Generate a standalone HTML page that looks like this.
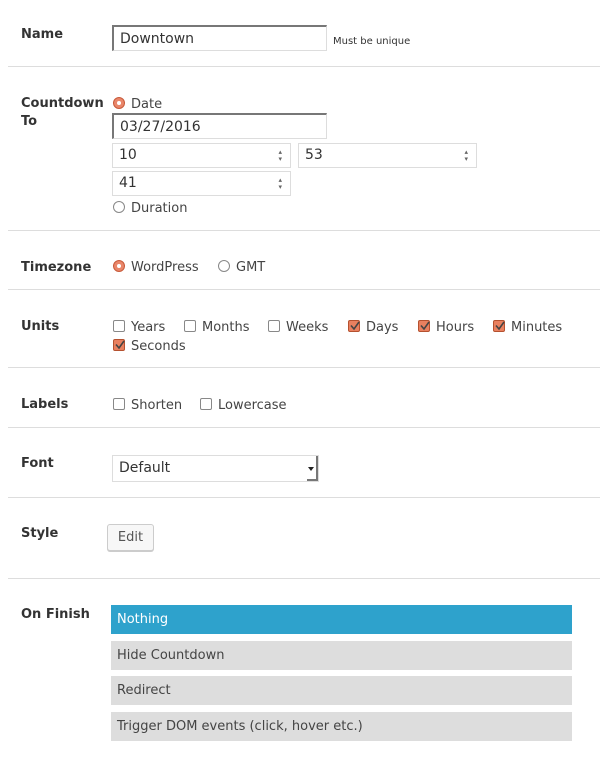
<!DOCTYPE html>
<html><head><meta charset="utf-8"><style>
*{margin:0;padding:0;box-sizing:border-box}
body{width:600px;height:757px;background:#fff;position:relative;font-family:"DejaVu Sans","Liberation Sans",sans-serif;font-size:13px;color:#444;overflow:hidden}
.a{position:absolute;white-space:nowrap;line-height:16px;margin-top:2px}
.l{font-weight:bold;color:#333;font-size:13px}
.hr{position:absolute;left:8px;right:0;height:1px;background:#ddd}
.in{position:absolute;border:1px solid #ddd;background:#fff;font-size:14px;color:#333;padding-left:6px;line-height:24px}
.in.d{border-top:2px solid #777;border-left:2px solid #777;box-shadow:none}
.sp{position:absolute;right:8px;top:5px;font-size:7px;line-height:7px;color:#666;text-align:center}
.r{position:absolute;width:12px;height:12px;border:1px solid #888;border-radius:50%;background:#fff}
.r.on{border-color:#c85a3a;background:#e9866a}
.r.on::after{content:"";position:absolute;left:3px;top:3px;width:4px;height:4px;border-radius:50%;background:#fff}
.c{position:absolute;width:12px;height:12px;border:1px solid #888;border-radius:2px;background:#fff}
.c.on{border-color:#b5512f;background:#e9805f}
.c.on svg{position:absolute;left:1px;top:0}
.opt{position:absolute;left:111px;width:461px;height:29px;background:#ddd;color:#444;padding-left:6px;line-height:30px}
</style></head><body>
<div class="a l" style="left:21px;top:25px">Name</div>
<div class="in d" style="left:112px;top:25px;width:215px;height:26px;line-height:24px">Downtown</div>
<div class="a" style="left:333px;top:32px;font-size:10px;color:#333">Must be unique</div>
<div class="hr" style="top:66px"></div>

<div class="a l" style="left:21px;top:94px">Countdown</div>
<div class="a l" style="left:21px;top:112px">To</div>
<div class="r on" style="left:113px;top:97px"></div><div class="a" style="left:131px;top:95px">Date</div>
<div class="in d" style="left:112px;top:113px;width:215px;height:26px">03/27/2016</div>
<div class="in" style="left:112px;top:143px;width:179px;height:25px;line-height:23px">10<div class="sp">▴<br>▾</div></div>
<div class="in" style="left:298px;top:143px;width:179px;height:25px;line-height:23px">53<div class="sp">▴<br>▾</div></div>
<div class="in" style="left:112px;top:171px;width:179px;height:25px;line-height:23px">41<div class="sp">▴<br>▾</div></div>
<div class="r" style="left:113px;top:201px"></div><div class="a" style="left:131px;top:199px">Duration</div>
<div class="hr" style="top:230px"></div>

<div class="a l" style="left:21px;top:258px">Timezone</div>
<div class="r on" style="left:113px;top:260px"></div><div class="a" style="left:131px;top:258px">WordPress</div>
<div class="r" style="left:218px;top:260px"></div><div class="a" style="left:236px;top:258px">GMT</div>
<div class="hr" style="top:289px"></div>

<div class="a l" style="left:21px;top:317px">Units</div>
<div class="c" style="left:113px;top:320px"></div><div class="a" style="left:131px;top:318px">Years</div>
<div class="c" style="left:184px;top:320px"></div><div class="a" style="left:202px;top:318px">Months</div>
<div class="c" style="left:268px;top:320px"></div><div class="a" style="left:286px;top:318px">Weeks</div>
<div class="c on" style="left:348px;top:320px"><svg width="10" height="10"><path d="M1 4.5L4 8L9 1" stroke="#444" stroke-width="1.6" fill="none"/></svg></div><div class="a" style="left:366px;top:318px">Days</div>
<div class="c on" style="left:418px;top:320px"><svg width="10" height="10"><path d="M1 4.5L4 8L9 1" stroke="#444" stroke-width="1.6" fill="none"/></svg></div><div class="a" style="left:436px;top:318px">Hours</div>
<div class="c on" style="left:493px;top:320px"><svg width="10" height="10"><path d="M1 4.5L4 8L9 1" stroke="#444" stroke-width="1.6" fill="none"/></svg></div><div class="a" style="left:511px;top:318px">Minutes</div>
<div class="c on" style="left:113px;top:339px"><svg width="10" height="10"><path d="M1 4.5L4 8L9 1" stroke="#444" stroke-width="1.6" fill="none"/></svg></div><div class="a" style="left:131px;top:337px">Seconds</div>
<div class="hr" style="top:367px"></div>

<div class="a l" style="left:21px;top:395px">Labels</div>
<div class="c" style="left:113px;top:398px"></div><div class="a" style="left:131px;top:396px">Shorten</div>
<div class="c" style="left:200px;top:398px"></div><div class="a" style="left:218px;top:396px">Lowercase</div>
<div class="hr" style="top:427px"></div>

<div class="a l" style="left:21px;top:454px">Font</div>
<div class="in" style="left:112px;top:455px;width:207px;height:27px;line-height:25px">Default
<div style="position:absolute;right:0;top:0;width:11px;height:25px;border-right:2px solid #777;border-bottom:2px solid #777"></div>
<div style="position:absolute;right:4px;top:11px;width:0;height:0;border-left:3px solid transparent;border-right:3px solid transparent;border-top:4px solid #222"></div></div>
<div class="hr" style="top:497px"></div>

<div class="a l" style="left:21px;top:524px">Style</div>
<div style="position:absolute;left:107px;top:524px;width:47px;height:27px;border:1px solid #ccc;border-radius:3px;background:#f7f7f7;box-shadow:0 1px 0 #ccc;text-align:center;line-height:26px;color:#555">Edit</div>
<div class="hr" style="top:578px"></div>

<div class="a l" style="left:21px;top:605px">On Finish</div>
<div class="opt" style="top:605px;background:#2ea2cc;color:#fff">Nothing</div>
<div class="opt" style="top:641px">Hide Countdown</div>
<div class="opt" style="top:676px">Redirect</div>
<div class="opt" style="top:712px">Trigger DOM events (click, hover etc.)</div>
</body></html>
